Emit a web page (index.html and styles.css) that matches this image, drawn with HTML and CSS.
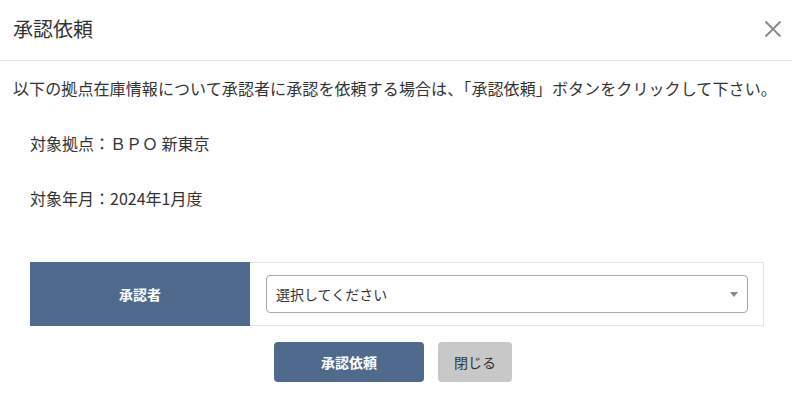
FILE: index.html
```html
<!DOCTYPE html>
<html lang="ja">
<head>
<meta charset="utf-8">
<link rel="stylesheet" href="styles.css">
</head>
<body>
<div class="modal">
  <div class="modal-header">
    <h1 class="modal-title">承認依頼</h1>
    <button class="close-btn" aria-label="閉じる">
      <svg width="18" height="18" viewBox="0 0 18 18"><path d="M1.5 1.5 L16.5 16.5 M16.5 1.5 L1.5 16.5" stroke="#888" stroke-width="1.8" fill="none"/></svg>
    </button>
  </div>
  <div class="modal-body">
    <p class="desc">以下の拠点在庫情報について承認者に承認を依頼する場合は、「承認依頼」ボタンをクリックして下さい。</p>
    <p class="info">対象拠点：ＢＰＯ 新東京</p>
    <p class="info">対象年月：2024年1月度</p>
    <div class="form-table">
      <div class="label-cell">承認者</div>
      <div class="input-cell">
        <div class="select">
          <span>選択してください</span>
          <span class="arrow"></span>
        </div>
      </div>
    </div>
    <div class="actions">
      <button class="btn btn-primary">承認依頼</button>
      <button class="btn btn-secondary">閉じる</button>
    </div>
  </div>
</div>
</body>
</html>
```
FILE: styles.css
```css
* { box-sizing: border-box; }
body {
  margin: 0;
  background: #fff;
  font-family: "Noto Sans CJK JP", "Noto Sans", sans-serif;
  color: #333;
}
.modal-header {
  height: 61px;
  border-bottom: 1px solid #e5e5e5;
  display: flex;
  align-items: center;
  justify-content: space-between;
  padding: 0 10px 2px 13px;
}
.modal-title {
  margin: 0;
  font-size: 20px;
  font-weight: 400;
  line-height: 28px;
  color: #333;
}
.close-btn {
  border: 0;
  background: none;
  padding: 0;
  width: 18px;
  height: 18px;
  display: flex;
}
.modal-body {
  padding: 15px 13px 0 13px;
}
.desc {
  margin: 0;
  font-size: 16px;
  line-height: 24px;
  letter-spacing: 0.1px;
}
.info {
  margin: 31px 0 0 17px;
  font-size: 16px;
  line-height: 24px;
}
.form-table {
  margin: 52px 15px 0 17px;
  display: flex;
  border: 1px solid #e5e5e5;
  height: 64px;
}
.label-cell {
  width: 220px;
  margin: -1px 0 -1px -1px;
  background: #506a8d;
  color: #fff;
  font-size: 14px;
  font-weight: 700;
  display: flex;
  align-items: center;
  justify-content: center;
}
.input-cell {
  flex: 1;
  padding: 12px 15px 12px 16px;
}
.select {
  height: 38px;
  border: 1px solid #a9a9a9;
  border-radius: 4px;
  display: flex;
  align-items: center;
  justify-content: space-between;
  padding: 0 9px 0 9px;
  font-size: 14px;
  color: #333;
}
.arrow {
  width: 0;
  height: 0;
  border-left: 4px solid transparent;
  border-right: 4px solid transparent;
  border-top: 5px solid #888;
}
.actions {
  display: flex;
  justify-content: center;
  gap: 14px;
  margin-top: 16px;
  padding-right: 6px;
}
.btn {
  height: 40px;
  border: 0;
  border-radius: 4px;
  font-family: inherit;
  font-size: 14px;
  padding: 0;
}
.btn-primary {
  width: 150px;
  background: #506a8d;
  color: #fff;
  font-weight: 700;
}
.btn-secondary {
  width: 74px;
  background: #c8c8c8;
  color: #333;
}
```
